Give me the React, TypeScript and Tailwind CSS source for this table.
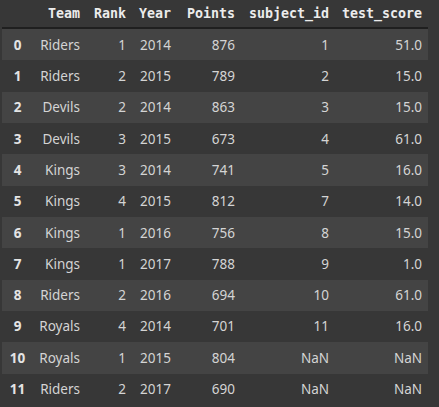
const rows: [string, number, number, number, string, string][] = [
  ['Riders', 1, 2014, 876, '1', '51.0'],
  ['Riders', 2, 2015, 789, '2', '15.0'],
  ['Devils', 2, 2014, 863, '3', '15.0'],
  ['Devils', 3, 2015, 673, '4', '61.0'],
  ['Kings', 3, 2014, 741, '5', '16.0'],
  ['Kings', 4, 2015, 812, '7', '14.0'],
  ['Kings', 1, 2016, 756, '8', '15.0'],
  ['Kings', 1, 2017, 788, '9', '1.0'],
  ['Riders', 2, 2016, 694, '10', '61.0'],
  ['Royals', 4, 2014, 701, '11', '16.0'],
  ['Royals', 1, 2015, 804, 'NaN', 'NaN'],
  ['Riders', 2, 2017, 690, 'NaN', 'NaN'],
];

const cols = ['Team', 'Rank', 'Year', 'Points', 'subject_id', 'test_score'];
const widths = ['w-[53px]', 'w-[46px]', 'w-[45px]', 'w-[64px]', 'w-[94px]', 'w-[93px]'];

export default function App() {
  return (
    <div className="w-[439px] h-[407px] bg-[#373737] pl-[2px] overflow-hidden">
      <div className="w-[426px]">
        <div className="flex h-[29px] items-center border-b-2 border-[#1f1f1f] font-['DejaVu_Sans_Mono',monospace] font-bold text-[13.3px] text-[#ececec]">
          <div className="w-[31px]" />
          {cols.map((c, i) => (
            <div key={c} className={`${widths[i]} text-right pr-[6px]`}>{c}</div>
          ))}
        </div>
        {rows.map((r, idx) => (
          <div
            key={idx}
            className={`flex h-[31.33px] items-center font-['Noto_Sans',sans-serif] text-[13.5px] text-[#d4d4d4] ${idx % 2 === 0 ? 'bg-[#444444]' : ''}`}
          >
            <div className="w-[31px] text-center font-bold text-[#e4e4e4]">{idx}</div>
            {r.map((v, i) => (
              <div key={i} className={`${widths[i]} text-right pr-[6px]`}>{v}</div>
            ))}
          </div>
        ))}
      </div>
    </div>
  );
}
